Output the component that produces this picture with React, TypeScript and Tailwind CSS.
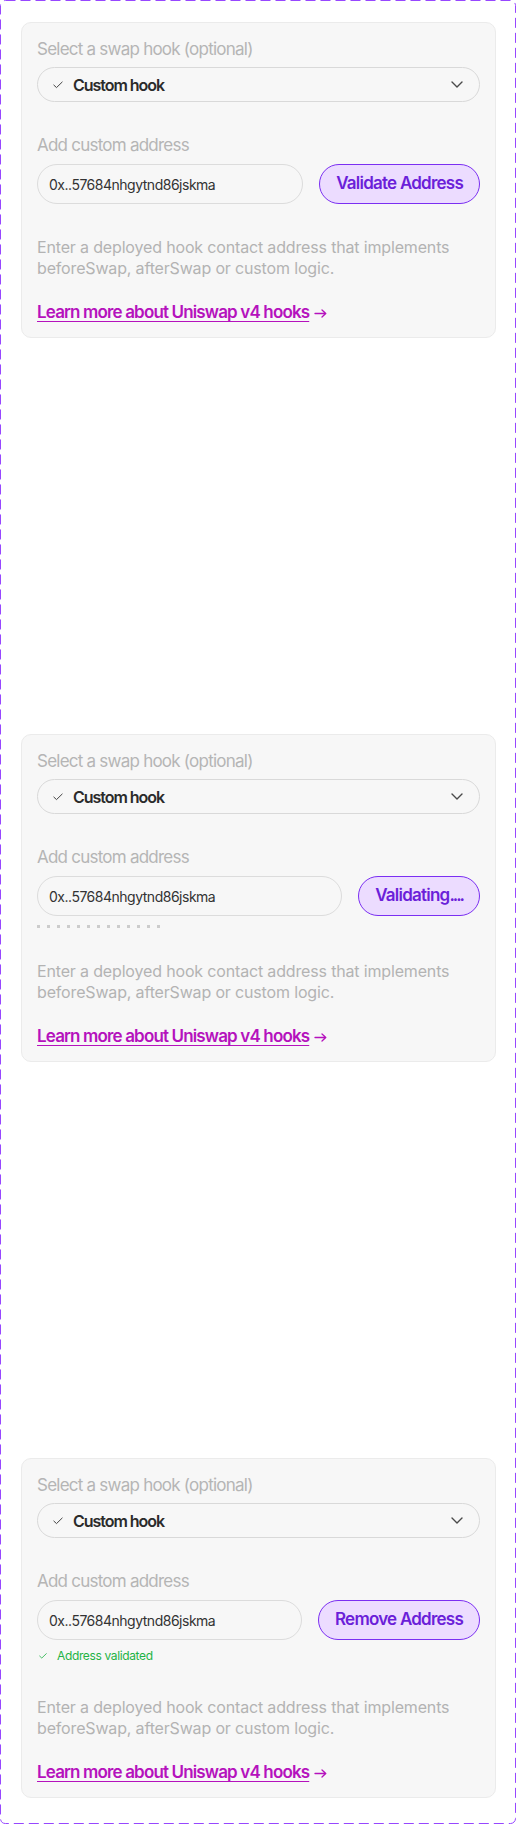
import { useState } from 'react';

type HookState = 'idle' | 'validating' | 'validated';

const font = { fontFamily: 'Inter, "Noto Sans", sans-serif' };

function CheckIcon({ className }: { className?: string }) {
  return (
    <svg viewBox="0 0 12 9" className={className} fill="none">
      <path d="M1 4.6 L4.2 7.6 L11 1" stroke="currentColor" strokeWidth="1.2" strokeLinecap="round" strokeLinejoin="round" />
    </svg>
  );
}

function ChevronIcon() {
  return (
    <svg viewBox="0 0 12 7" className="h-[7px] w-[12px] text-[#4a4a4a]" fill="none">
      <path d="M1 1 L6 6 L11 1" stroke="currentColor" strokeWidth="1.4" strokeLinecap="round" strokeLinejoin="round" />
    </svg>
  );
}

function ArrowIcon() {
  return (
    <svg viewBox="0 0 13 9" className="h-[9px] w-[13px] text-[#b512bd]" fill="none">
      <path d="M1 4.5 H11.5 M8 1 L11.8 4.5 L8 8" stroke="currentColor" strokeWidth="1.3" strokeLinecap="round" strokeLinejoin="round" />
    </svg>
  );
}

function HookCard({ state }: { state: HookState }) {
  return (
    <div className="w-[475px] rounded-[10px] border border-[#ebebeb] bg-[#f7f7f7] px-[15px] pb-[12px] pt-[14px]">
      <p className="text-[17px] leading-[24px] tracking-[-0.045em] text-[#b5b5b5]">Select a swap hook (optional)</p>

      <div className="mt-[6px] flex h-[35px] items-center justify-between rounded-full border border-[#d9d9d9] pl-[15px] pr-[16px]">
        <div className="flex items-center gap-[10px]">
          <CheckIcon className="h-[8px] w-[10px] text-[#444]" />
          <span className="text-[16px] font-semibold tracking-[-0.065em] text-[#2b2b2b]">Custom hook</span>
        </div>
        <ChevronIcon />
      </div>

      <p className="mt-[31px] text-[17px] leading-[24px] tracking-[-0.045em] text-[#b5b5b5]">Add custom address</p>

      <div className="mt-[7px] flex gap-4">
        <div className="flex h-[40px] flex-1 items-center rounded-full border border-[#dcdcdc] pl-[11px] text-[14px] tracking-[-0.035em] text-[#333]">
          0x..57684nhgytnd86jskma
        </div>
        <button
          type="button"
          className="h-[40px] rounded-full border border-[#7b2ff2] bg-[#ecdcff] px-4 text-[17px] font-semibold tracking-[-0.045em] text-[#6b1fd9]"
        >
          {state === 'idle' && 'Validate Address'}
          {state === 'validating' && (
            <>
              Validating<span className="tracking-[-0.12em]">....</span>
            </>
          )}
          {state === 'validated' && 'Remove Address'}
        </button>
      </div>

      {state === 'validating' && (
        <div className="mt-[9px] flex gap-[7px]">
          {Array.from({ length: 13 }).map((_, i) => (
            <span key={i} className="h-[3px] w-[3px] bg-[#cccccc]" />
          ))}
        </div>
      )}

      {state === 'validated' && (
        <div className="mt-[8px] flex h-[16px] items-center gap-[10px] pl-[2px]">
          <CheckIcon className="h-[6px] w-[8px] text-[#1fb345]" />
          <span className="text-[12px] tracking-[-0.03em] text-[#1fb345]">Address validated</span>
        </div>
      )}

      <p className="mt-[33px] text-[16px] leading-[21px] tracking-[-0.01em] text-[#b3b3b3]">
        Enter a deployed hook contact address that implements
        <br />
        beforeSwap, afterSwap or custom logic.
      </p>

      <div className="mt-[22px] flex h-[24px] items-center gap-[5px]">
        <a href="#" className="text-[17px] font-semibold tracking-[-0.05em] text-[#b512bd] underline underline-offset-[3px]">
          Learn more about Uniswap v4 hooks
        </a>
        <ArrowIcon />
      </div>
    </div>
  );
}

export default function App() {
  const [states] = useState<HookState[]>(['idle', 'validating', 'validated']);

  return (
    <div className="relative h-[1825px] w-[516px] bg-white" style={font}>
      <svg className="pointer-events-none absolute inset-0 h-full w-full" viewBox="0 0 516 1825" preserveAspectRatio="none">
        <rect x="0.5" y="0.5" width="515" height="1823" rx="5" fill="none" stroke="#9747ff" strokeWidth="1" strokeDasharray="10 5" />
      </svg>
      <div className="flex flex-col gap-[396px] pl-[21px] pt-[22px]">
        {states.map((s) => (
          <HookCard key={s} state={s} />
        ))}
      </div>
    </div>
  );
}
